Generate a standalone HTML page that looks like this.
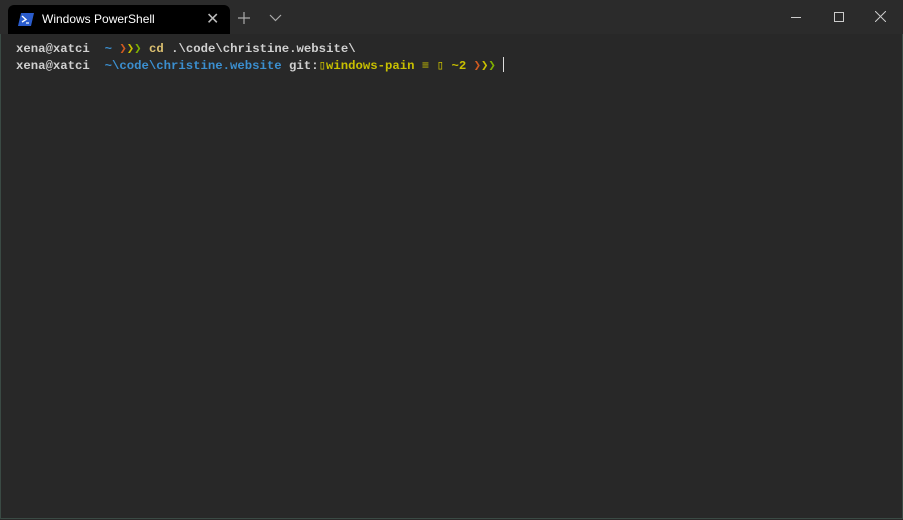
<!DOCTYPE html>
<html><head><meta charset="utf-8"><style>
html,body{margin:0;padding:0;width:903px;height:520px;overflow:hidden;background:#282828;}
.title{position:absolute;left:0;top:0;width:903px;height:34px;background:#2b2b2b;}
.tab{position:absolute;left:8px;top:5px;width:222px;height:29px;background:#000;border-radius:6px 6px 0 0;}
.tab .t{position:absolute;left:34px;top:7px;color:#fff;font:12px "Liberation Sans",sans-serif;}
.tab .x{position:absolute;left:198px;top:4px;color:#bbb;font:16px "Liberation Sans",sans-serif;}
.term{position:absolute;left:0;top:34px;width:901px;height:484px;background:#282828;border:1px solid #3a4a44;border-top:none;}
pre{position:absolute;left:16px;top:41px;margin:0;font:bold 12.3px/17px "Liberation Mono","DejaVu Sans Mono",monospace;color:#d0d0d0;}
.b{color:#3b8fd0}.y{color:#c8c000}.o{color:#d05a20}.g{color:#7fb000}.yc{color:#dcc070}
</style></head><body>
<div class="title">
 <div class="tab">
  <svg style="position:absolute;left:10px;top:8px" width="16" height="13"><path d="M3 0H16L13 13H0Z" fill="#2a5ccc"/><path d="M4 3L8 6.5L4 9" stroke="#fff" stroke-width="1.4" fill="none"/><path d="M8 10H11" stroke="#fff" stroke-width="1.2"/></svg>
  <div class="t">Windows PowerShell</div>
  <div class="x">✕</div>
 </div>
 <svg style="position:absolute;left:237px;top:11px" width="14" height="14"><path d="M7 1V13M1 7H13" stroke="#aaa" stroke-width="1.2"/></svg>
 <svg style="position:absolute;left:269px;top:14px" width="13" height="8"><path d="M1 1L6.5 6.5L12 1" stroke="#aaa" stroke-width="1.2" fill="none"/></svg>
 <div style="position:absolute;left:791px;top:17px;width:10px;height:1px;background:#ccc"></div>
 <div style="position:absolute;left:834px;top:12px;width:8px;height:8px;border:1px solid #ccc"></div>
 <svg style="position:absolute;left:875px;top:11px" width="11" height="11"><path d="M0 0L11 11M11 0L0 11" stroke="#ccc" stroke-width="1"/></svg>
</div>
<div class="term"></div>
<pre>xena@xatci  <span class="b">~</span> <span class="o">❯</span><span class="y">❯</span><span class="g">❯</span> <span class="yc">cd</span> .\code\christine.website\
xena@xatci  <span class="b">~\code\christine.website</span> git:<span class="y">▯windows-pain ≡ ▯ ~2</span> <span class="o">❯</span><span class="y">❯</span><span class="g">❯</span></pre>
<div style="position:absolute;left:503px;top:57px;width:1px;height:15px;background:#ddd"></div>
</body></html>
